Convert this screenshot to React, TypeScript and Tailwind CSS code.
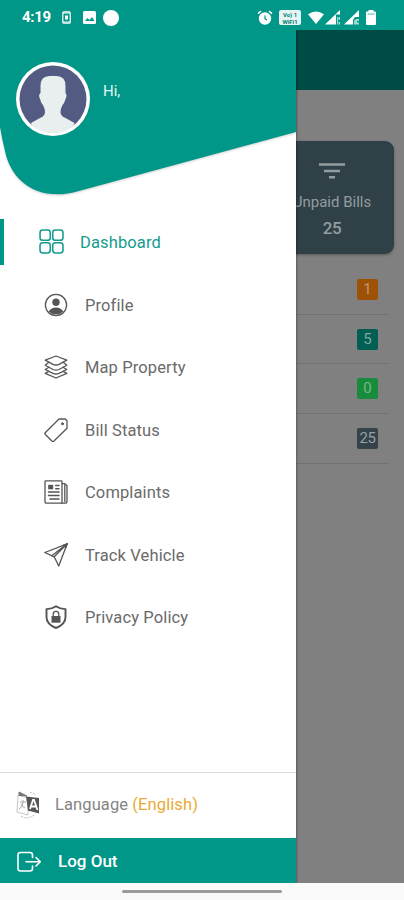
import type { ReactNode } from 'react';

interface MenuItem {
  label: string;
  icon: ReactNode;
}

interface IconProps {
  children: ReactNode;
  className?: string;
}

function LineIcon({ children, className = 'size-6' }: IconProps) {
  return (
    <svg
      className={className}
      viewBox="0 0 24 24"
      fill="none"
      stroke="currentColor"
      strokeWidth="1.3"
      strokeLinejoin="round"
      strokeLinecap="round"
    >
      {children}
    </svg>
  );
}

const menuItems: MenuItem[] = [
  {
    label: 'Profile',
    icon: (
      <LineIcon>
        <circle cx="12" cy="12" r="10.6" />
        <circle cx="12" cy="9.3" r="3.7" fill="currentColor" stroke="none" />
        <path d="M4.6 18.6c1.8-3 4.4-4.1 7.4-4.1s5.6 1.1 7.4 4.1A10.6 10.6 0 0 1 4.6 18.6z" fill="currentColor" stroke="none" />
      </LineIcon>
    ),
  },
  {
    label: 'Map Property',
    icon: (
      <LineIcon>
        <path d="M12 1L22.8 5.2 15 9.3q-3 1.4-6 0L1.2 5.2z" />
        <path d="M4.5 7.5L1.2 10.2 9 14.5q3 1.4 6 0l7.8-4.3-3.3-2.7" />
        <path d="M5 12.3L1.2 14.5 9 18.3q3 1.4 6 0l7.8-3.8-3.8-2.2" />
        <path d="M5 16.3L1.2 18.3 12 23l10.800-4.700L19 16.300" />
      </LineIcon>
    ),
  },
  {
    label: 'Bill Status',
    icon: (
      <LineIcon>
        <path d="M15 1h6.300L23 2.700v7.500L9.700 23.300q-.8.7-1.600 0L1.200 16.300q-.7-.8 0-1.600z" />
        <circle cx="18.5" cy="5.8" r="1" fill="currentColor" strokeWidth="1" />
      </LineIcon>
    ),
  },
  {
    label: 'Complaints',
    icon: (
      <LineIcon>
        <path d="M1 1.600q0-.8.8-.8h15.400q.8 0 .8.8v21.600H2.500Q1 23.200 1 21.700z" />
        <path d="M18 3.700h3l2 2v15.600q0 1.900-1.900 1.900H18M20.800 5v16.500" />
        <path d="M4.200 4.800h5v4.500h-5z" fill="currentColor" stroke="none" />
        <path d="M11.700 5.500h3.300M11.700 8.700h3.300M4.500 12h10.500M4.500 15.400h10.500M6 19h9" strokeWidth="1.5" />
      </LineIcon>
    ),
  },
  {
    label: 'Track Vehicle',
    icon: (
      <LineIcon>
        <path d="M23.2.8L.8 9.500l9.400 4.300L14.700 23z" />
        <path d="M23.2.8l-13 13M23.200.8L7.800 12.700" />
        <path d="M19.500 2.200l3.700-1.400-1.400 3.700z" fill="currentColor" />
      </LineIcon>
    ),
  },
  {
    label: 'Privacy Policy',
    icon: (
      <LineIcon>
        <path d="M12 1.200c2.500 1.800 5.500 2.700 9.500 2.900V12c0 5.500-4.200 8.900-9.500 11-5.300-2.100-9.500-5.500-9.500-11V4.100C6.500 3.900 9.500 3 12 1.200z" strokeWidth="1.9" />
        <path d="M7.500 11h9v6.700h-9z" fill="currentColor" stroke="none" />
        <path d="M9.200 11V9.200a2.800 2.800 0 0 1 5.600 0V11" />
      </LineIcon>
    ),
  },
];

function StatusBar() {
  return (
    <div className="flex h-[30px] shrink-0 items-center bg-[#009688] pt-[5px] pl-[22px] pr-[28px] text-white">
      <span className="w-[40px] text-[15px] font-bold leading-none tracking-[-0.3px]">4:19</span>
      <svg className="h-[13px] w-[9px]" viewBox="0 0 9 13" fill="none" stroke="currentColor">
        <rect x=".8" y=".8" width="7.4" height="11.4" rx="1" strokeWidth="1.2" />
        <path d="M1 2h7M1 11h7" />
        <path d="M3 4.500h3v4H3z" fill="currentColor" stroke="none" />
      </svg>
      <svg className="ml-[12px] h-[13px] w-[13px]" viewBox="0 0 13 13">
        <rect width="13" height="13" rx="1.5" fill="currentColor" />
        <path d="M2 10l2.500-3 2 2L9 6l2.500 4z" fill="#009688" />
      </svg>
      <div className="ml-[7px] size-4 rounded-full bg-white" />

      <div className="ml-auto flex items-center">
        <svg className="h-[15px] w-[16px]" viewBox="0 0 16 15" fill="none">
          <circle cx="8" cy="8.5" r="6.2" fill="currentColor" />
          <path d="M1 3.700L4 1M15 3.700L12 1" stroke="currentColor" strokeWidth="1.6" />
          <path d="M8 5.500v3.300l2 1.200" stroke="#009688" strokeWidth="1.2" />
        </svg>
        <div className="ml-[6px] flex h-[15px] w-[22px] flex-col justify-center rounded-[2px] bg-[#e6f5f3] text-center text-[6px] font-bold leading-[7px] text-[#008075]">
          <span>Vo) 1</span>
          <span>WiFi1</span>
        </div>
        <svg className="ml-[7px] h-[13px] w-[16px]" viewBox="0 0 16 13" fill="currentColor">
          <path d="M0 3.300Q8-2.300 16 3.300L8 13z" />
        </svg>
        <svg className="ml-[1px] h-[15px] w-[15px]" viewBox="0 0 15 15" fill="currentColor">
          <path d="M0 14.500L15 0v4.500h-4v10z" />
          <path d="M12 7h1v7.500h-1zM13.500 7H15v3h-1.500zM13.500 12H15v2.500h-1.500z" opacity=".65" />
        </svg>
        <svg className="ml-[4px] h-[15px] w-[15px]" viewBox="0 0 15 15" fill="currentColor">
          <path d="M0 14.500L15 0v7h-4l-2 3v4.500z" />
          <path d="M10 11l2-2h3v2h-2v1.500h2v2h-5z" opacity=".65" />
        </svg>
        <svg className="ml-[7px] h-[15px] w-[10px]" viewBox="0 0 10 15" fill="currentColor">
          <path d="M2.500 0h5v1.500H9q1 0 1 1v11.500q0 1-1 1H1q-1 0-1-1V2.500q0-1 1-1h1.500z" />
          <path d="M1.500 4h7" stroke="#009688" strokeWidth=".7" />
        </svg>
      </div>
    </div>
  );
}

function Avatar() {
  return (
    <svg className="size-[74px]" viewBox="0 0 74 74">
      <defs>
        <clipPath id="avatar-clip">
          <circle cx="37" cy="37" r="34" />
        </clipPath>
      </defs>
      <circle cx="37" cy="37" r="37" fill="#fff" />
      <circle cx="37" cy="37" r="33.5" fill="#535b83" />
      <path
        clipPath="url(#avatar-clip)"
        d="M24.500 24q0-10 9-10h7q9 0 9 10v7q2 2 0 6-1 4-3 6-2 4-2 7 0 4 5 6l9 5-6 13H21l-6-13 9-5q5-2 5-6 0-3-2-7-2-2-3-6-2-4 .5-6z"
        fill="#e9efef"
      />
    </svg>
  );
}

function Drawer() {
  return (
    <aside className="z-10 flex w-[296px] shrink-0 flex-col bg-white shadow-[1px_0_2px_rgba(0,0,0,0.3)]">
      {/* Header */}
      <div className="relative h-[182px] shrink-0">
        <svg className="absolute inset-0 h-[181px] w-[296px] drop-shadow-[0_1px_1px_rgba(0,0,0,0.18)]" viewBox="0 0 296 181">
          <path d="M0 0H296V102L79 161C38 173 11 151 5 121Q2 109 0 97z" fill="#009688" />
        </svg>
        <div className="relative flex items-start gap-[13px] pt-[32px] pl-[16px]">
          <Avatar />
          <span className="pt-[19px] text-[15px] leading-[20px] text-[#e0f5f2]">Hi,</span>
        </div>
      </div>

      {/* Menu */}
      <nav className="flex flex-1 flex-col text-[16.5px] tracking-[0.12px] text-[#6a6a6a]">
        <a className="flex h-[62.5px] items-center text-[#149c8f]">
          <span className="-mt-[2px] h-[46px] w-[4px] bg-[#009688]" />
          <LineIcon className="-mt-[3px] ml-[35px] size-[25px]">
            <rect x="1" y="1" width="9.8" height="9.8" rx="2.5" strokeWidth="1.5" />
            <rect x="13.2" y="1" width="9.8" height="9.8" rx="2.5" strokeWidth="1.5" />
            <rect x="1" y="13.2" width="9.8" height="9.8" rx="2.5" strokeWidth="1.5" />
            <rect x="13.2" y="13.2" width="9.8" height="9.8" rx="2.5" strokeWidth="1.5" />
          </LineIcon>
          <span className="ml-[16px]">Dashboard</span>
        </a>
        {menuItems.map((item) => (
          <a key={item.label} className="flex h-[62.5px] items-center gap-[17px] pt-px pl-[44px]">
            <span className="-mt-[3px] text-[#555]">{item.icon}</span>
            {item.label}
          </a>
        ))}
      </nav>

      {/* Language */}
      <div className="flex h-[66px] items-center border-t border-[#ddd] pb-px pl-[16px] text-[16.5px] tracking-[0.1px] text-[#858585]">
        <svg className="h-[28px] w-[24px]" viewBox="0 0 24 28" fill="none">
          <path d="M2 4l10 3v17L1 21z" stroke="#c5c5c5" />
          <path d="M4 11h6M7 9v2q0 5-4 7M5 13q1 3 4 4" stroke="#aaa" />
          <path d="M10 5.500l13 1.500v15.500l-11-3z" fill="#555" />
          <path d="M3 1l8 4-8-.5z" fill="#777" stroke="#777" />
          <path d="M14 1l6 3M5 25q6 4 13-1" stroke="#bbb" strokeDasharray="2 1" />
          <path d="M14 18l3-9h1l3.500 10M15 15.500h5" stroke="#fff" strokeWidth="1.8" />
        </svg>
        <span className="ml-[15px]">
          Language <span className="text-[#e8ab35]">(English)</span>
        </span>
      </div>

      {/* Log out */}
      <button className="flex h-[45px] shrink-0 items-center gap-[17px] bg-[#009688] pt-[2px] pl-[17px] text-[17px] font-medium text-white">
        <LineIcon className="size-[24px]">
          <path d="M15.500 7.500V5q0-2.500-2.500-2.500H3.500Q1 2.500 1 5v13.500Q1 21 3.500 21H13q2.500 0 2.500-2.500V16" strokeWidth="1.6" />
          <path d="M9 11.800h14M19 7.500l4.300 4.300L19 16" strokeWidth="1.6" />
        </LineIcon>
        Log Out
      </button>
    </aside>
  );
}

// Dimmed page behind the open drawer
function Backdrop() {
  return (
    <main className="min-w-0 flex-1 bg-[#808080] text-[#929d9f]">
      <div className="h-[60px] bg-[#004b43]" />
      <div className="flex justify-end pt-[51px] pr-[10px]">
        <div className="flex h-[113px] w-[124px] shrink-0 flex-col items-center rounded-[9px] bg-[#304047] pt-[22px] shadow-[0_1px_3px_rgba(0,0,0,0.3)]">
          <svg className="h-[16px] w-[26px]" viewBox="0 0 26 16" stroke="currentColor" strokeWidth="2.4">
            <path d="M0 1.500h26M5 8h16M10 14.200h6" />
          </svg>
          <span className="mt-[13px] text-[15px] leading-[20px] whitespace-nowrap">Unpaid Bills</span>
          <span className="mt-[5px] text-[17px] font-medium leading-[22px] tracking-[-0.3px]">25</span>
        </div>
      </div>
      <div className="mr-[15px] pt-[11px] text-[15px]">
        <div className="flex h-[50px] items-center justify-end border-b border-[#717171] pr-[11px]">
          <span className="flex size-[21px] items-center justify-center rounded-[2px] bg-[#9e5205] text-[#c49871]">1</span>
        </div>
        <div className="flex h-[49px] items-center justify-end border-b border-[#717171] pr-[11px]">
          <span className="flex size-[21px] items-center justify-center rounded-[2px] bg-[#005e52] text-[#7fa8a2]">5</span>
        </div>
        <div className="flex h-[50px] items-center justify-end border-b border-[#717171] pr-[11px]">
          <span className="flex size-[21px] items-center justify-center rounded-[2px] bg-[#198b3c] text-[#70bb85]">0</span>
        </div>
        <div className="flex h-[50px] items-center justify-end border-b border-[#717171] pr-[11px]">
          <span className="flex size-[21px] items-center justify-center rounded-[2px] bg-[#34434a] text-[#96a0a5] tracking-[-0.4px]">25</span>
        </div>
      </div>
    </main>
  );
}

export default function App() {
  return (
    <div className="flex h-[900px] w-[404px] flex-col overflow-hidden bg-[#fafafa] font-[Roboto,sans-serif]">
      <StatusBar />
      <div className="flex min-h-0 flex-1 overflow-hidden">
        <Drawer />
        <Backdrop />
      </div>
      <div className="flex h-[17px] shrink-0 items-center justify-center bg-[#fafafa]">
        <div className="h-[3px] w-[160px] rounded-full bg-[#9b9b9b]" />
      </div>
    </div>
  );
}
